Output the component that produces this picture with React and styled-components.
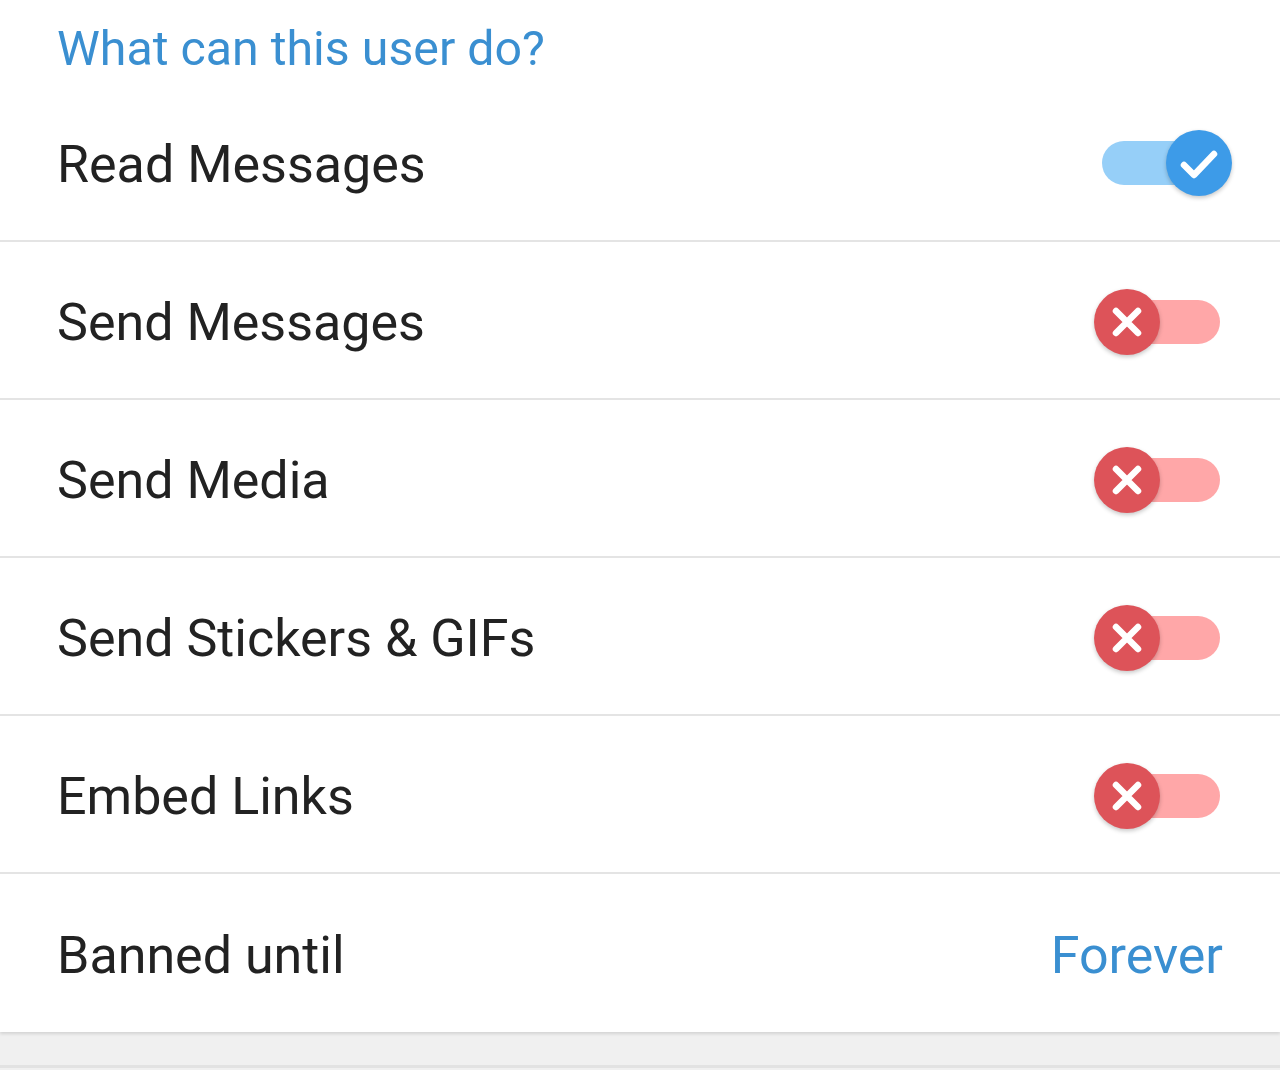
import React from "react";
import styled, { createGlobalStyle } from "styled-components";

const GlobalStyle = createGlobalStyle`
	html, body {
		margin: 0;
		padding: 0;
		background: #ffffff;
	}
	body {
		font-family: Roboto, "Noto Sans", sans-serif;
	}
`;

const Page = styled.div`
	width: 1280px;
	height: 1070px;
	overflow: hidden;
	background: #f0f0f0;
`;

const Card = styled.div`
	background: #ffffff;
	box-shadow: 0 2px 3px rgba(0, 0, 0, 0.12);
	position: relative;
`;

const Header = styled.div`
	height: 84px;
	padding: 12px 0 0 57px;
	display: flex;
	align-items: center;
	box-sizing: border-box;
	font-size: 48.3px;
	color: #3a8fd1;
`;

const Row = styled.div`
	height: 158px;
	box-sizing: border-box;
	display: flex;
	align-items: center;
	justify-content: space-between;
	padding: 4px 48px 0 57px;
	border-bottom: ${(p) => (p.last ? "none" : "2px solid #e4e4e4")};
`;

const Label = styled.span`
	font-size: 52px;
	color: #222222;
`;

const Value = styled.span`
	font-size: 52px;
	color: #3a8fd1;
	margin-right: 9px;
`;

const Toggle = styled.div`
	position: relative;
	width: 138px;
	height: 66px;
	flex-shrink: 0;
	margin-top: ${(p) => (p.on ? "-2px" : "0")};
`;

const Track = styled.div`
	position: absolute;
	left: 8px;
	top: 11px;
	width: 118px;
	height: 44px;
	border-radius: 22px;
	background: ${(p) => (p.on ? "#96cff8" : "#ffa7a8")};
`;

const Knob = styled.div`
	position: absolute;
	top: 0;
	${(p) => (p.on ? "right: 0;" : "left: 0;")}
	width: 66px;
	height: 66px;
	border-radius: 50%;
	background: ${(p) => (p.on ? "#3d9be8" : "#dd5359")};
	box-shadow: 0 2px 4px rgba(0, 0, 0, 0.22);
	display: flex;
	align-items: center;
	justify-content: center;
`;

const Footer = styled.div`
	height: 33px;
	border-bottom: 3px solid #e2e2e2;
	background: #f0f0f0;
`;

function Switch({ on }) {
	return (
		<Toggle on={on}>
			<Track on={on} />
			<Knob on={on}>
				{on ? (
					<svg width="66" height="66" viewBox="0 0 66 66">
						<path
							d="M18 35 L28 45 L48 24"
							fill="none"
							stroke="#ffffff"
							strokeWidth="6.5"
							strokeLinecap="round"
							strokeLinejoin="round"
						/>
					</svg>
				) : (
					<svg width="66" height="66" viewBox="0 0 66 66">
						<path
							d="M22 22 L44 44 M44 22 L22 44"
							fill="none"
							stroke="#ffffff"
							strokeWidth="6.5"
							strokeLinecap="round"
						/>
					</svg>
				)}
			</Knob>
		</Toggle>
	);
}

const permissions = [
	{ label: "Read Messages", on: true },
	{ label: "Send Messages", on: false },
	{ label: "Send Media", on: false },
	{ label: "Send Stickers & GIFs", on: false },
	{ label: "Embed Links", on: false },
];

export default function App() {
	return (
		<Page>
			<GlobalStyle />
			<Card>
				<Header>What can this user do?</Header>
				{permissions.map((p) => (
					<Row key={p.label}>
						<Label>{p.label}</Label>
						<Switch on={p.on} />
					</Row>
				))}
				<Row last>
					<Label>Banned until</Label>
					<Value>Forever</Value>
				</Row>
			</Card>
			<Footer />
		</Page>
	);
}
